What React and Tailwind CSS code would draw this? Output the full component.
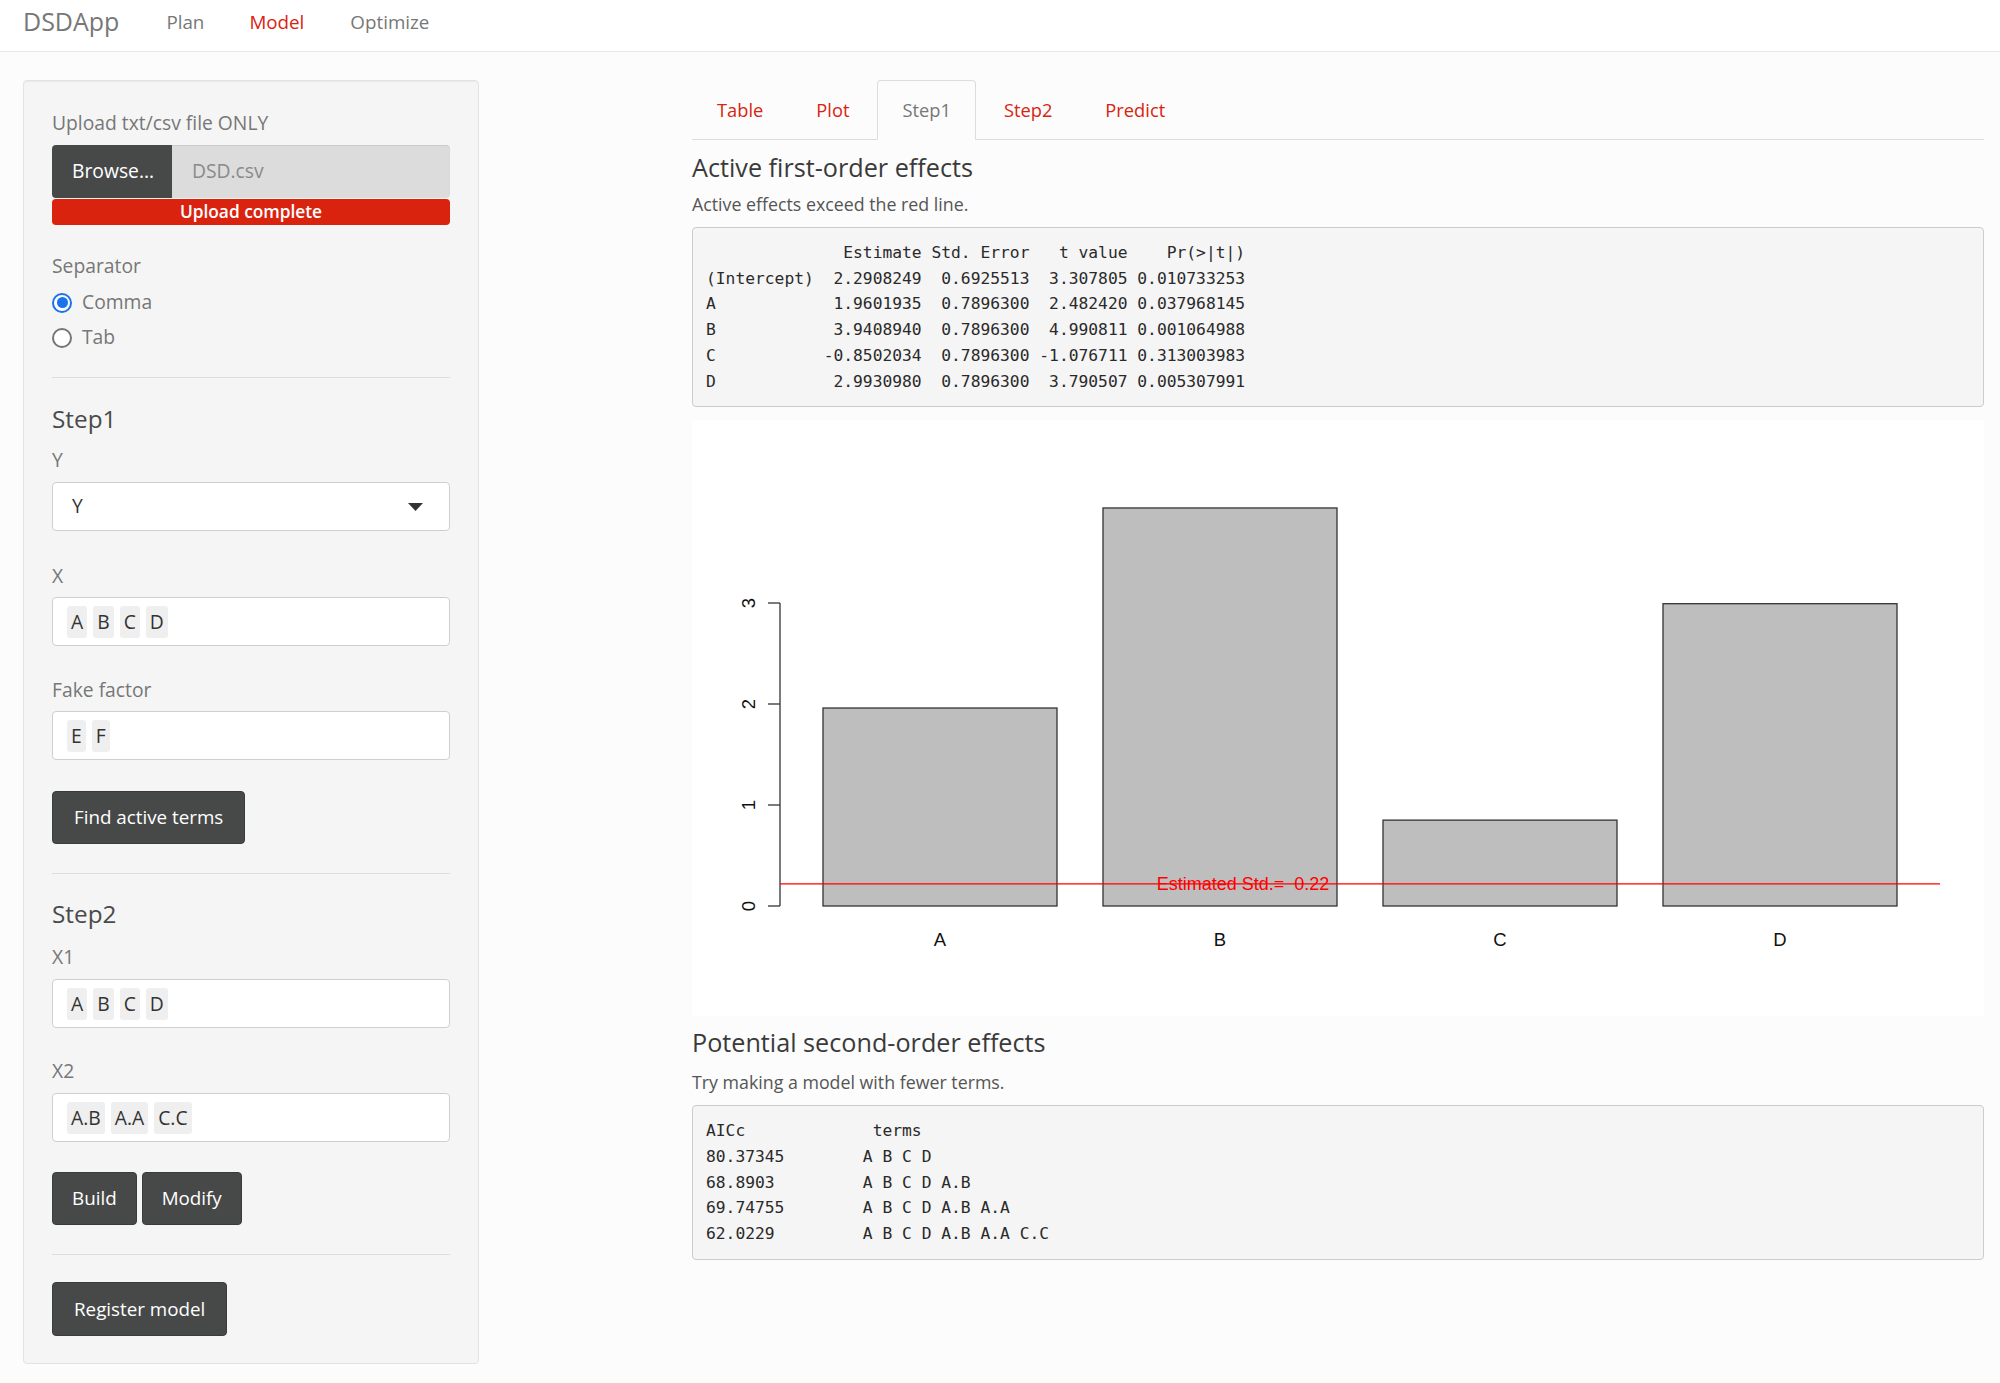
import React from "react";

const coefRows = [
  "              Estimate Std. Error   t value    Pr(>|t|)",
  "(Intercept)  2.2908249  0.6925513  3.307805 0.010733253",
  "A            1.9601935  0.7896300  2.482420 0.037968145",
  "B            3.9408940  0.7896300  4.990811 0.001064988",
  "C           -0.8502034  0.7896300 -1.076711 0.313003983",
  "D            2.9930980  0.7896300  3.790507 0.005307991",
];

const aicRows = [
  "AICc             terms",
  "80.37345        A B C D",
  "68.8903         A B C D A.B",
  "69.74755        A B C D A.B A.A",
  "62.0229         A B C D A.B A.A C.C",
];

const bars = [
  { name: "A", value: 1.9601935 },
  { name: "B", value: 3.940894 },
  { name: "C", value: 0.8502034 },
  { name: "D", value: 2.993098 },
];

const Label = ({ children, className = "" }) => (
  <div className={`text-[19.3px] leading-[26px] text-[#777] ${className}`}>
    {children}
  </div>
);

const Heading = ({ children, className = "" }) => (
  <div className={`text-[24.3px] leading-[32px] text-[#4a4a4a] ${className}`}>
    {children}
  </div>
);

const Divider = ({ className = "" }) => (
  <div className={`h-px bg-[#dedede] ${className}`} />
);

const DarkButton = ({ children, className = "" }) => (
  <button
    className={`h-[53px] rounded-[4px] bg-[#474949] border border-[#3a3c3c] text-white text-[18.8px] ${className}`}
  >
    {children}
  </button>
);

const TagInput = ({ tags, className = "" }) => (
  <div
    className={`h-[49px] bg-white border border-[#cfcfcf] rounded-[4px] flex items-center gap-[6px] pl-[14px] ${className}`}
  >
    {tags.map((t) => (
      <span
        key={t}
        className="h-[32px] px-[4px] rounded-[3px] bg-[#efefef] text-[#333] text-[19.3px] leading-[32px]"
      >
        {t}
      </span>
    ))}
  </div>
);

const Radio = ({ checked, label, className = "" }) => (
  <div className={`h-[35px] flex items-center gap-[10px] ${className}`}>
    {checked ? (
      <span className="w-[20px] h-[20px] rounded-full border-[2px] border-[#1a73e8] bg-white flex items-center justify-center">
        <span className="w-[11px] h-[11px] rounded-full bg-[#1a73e8]" />
      </span>
    ) : (
      <span className="w-[20px] h-[20px] rounded-full border-[2px] border-[#767676] bg-white" />
    )}
    <span className="text-[19.3px] text-[#777]">{label}</span>
  </div>
);

const Sidebar = () => (
  <div className="w-[456px] h-[1284px] bg-[#f5f5f5] border border-[#e3e3e3] rounded-[4px] shadow-[inset_0_1px_1px_rgba(0,0,0,0.05)] px-[28px] pt-[29px]">
    <Label>Upload txt/csv file ONLY</Label>
    <div className="mt-[9px] flex h-[53px]">
      <div className="w-[120px] bg-[#474949] rounded-l-[4px] flex items-center pl-[20px] text-white text-[19.3px] font-medium">
        Browse...
      </div>
      <div className="flex-1 bg-[#dcdcdc] rounded-r-[4px] flex items-center pl-[20px] text-[#8a8a8a] text-[19.3px] shadow-[inset_0_1px_1px_rgba(0,0,0,0.08)]">
        DSD.csv
      </div>
    </div>
    <div className="mt-[1px] h-[26px] bg-[#d9230f] rounded-[4px] flex items-center justify-center text-white text-[17.3px] font-semibold">
      Upload complete
    </div>

    <Label className="mt-[28px]">Separator</Label>
    <Radio checked label="Comma" className="mt-[6px]" />
    <Radio label="Tab" />

    <Divider className="mt-[22px]" />

    <Heading className="mt-[25px]">Step1</Heading>
    <Label className="mt-[12px]">Y</Label>
    <div className="mt-[9px] h-[49px] bg-white border border-[#cfcfcf] rounded-[4px] flex items-center justify-between pl-[19px] pr-[26px]">
      <span className="text-[19.3px] text-[#333]">Y</span>
      <svg width="15" height="8" viewBox="0 0 15 8">
        <path d="M0 0 L15 0 L7.5 8 Z" fill="#333" />
      </svg>
    </div>
    <Label className="mt-[32px]">X</Label>
    <TagInput tags={["A", "B", "C", "D"]} className="mt-[8px]" />
    <Label className="mt-[31px]">Fake factor</Label>
    <TagInput tags={["E", "F"]} className="mt-[8px]" />
    <DarkButton className="mt-[31px] h-[52px] px-[21px]">Find active terms</DarkButton>

    <Divider className="mt-[29px]" />

    <Heading className="mt-[24px]">Step2</Heading>
    <Label className="mt-[14px]">X1</Label>
    <TagInput tags={["A", "B", "C", "D"]} className="mt-[9px]" />
    <Label className="mt-[30px]">X2</Label>
    <TagInput tags={["A.B", "A.A", "C.C"]} className="mt-[9px]" />
    <div className="mt-[30px] flex gap-[5px]">
      <DarkButton className="px-[19px]">Build</DarkButton>
      <DarkButton className="px-[19px]">Modify</DarkButton>
    </div>

    <Divider className="mt-[29px]" />

    <DarkButton className="mt-[27px] h-[54px] px-[21px]">Register model</DarkButton>
  </div>
);

const Tabs = () => {
  const tabs = ["Table", "Plot", "Step1", "Step2", "Predict"];
  return (
    <div className="flex border-b border-[#dddddd] h-[60px]">
      {tabs.map((t) => {
        const active = t === "Step1";
        return (
          <div
            key={t}
            className={`h-[60px] mr-[3px] px-[24px] flex items-center text-[18.3px] rounded-t-[4px] border ${
              active
                ? "border-[#dddddd] border-b-[#fcfcfc] bg-[#fcfcfc] text-[#777]"
                : "border-transparent text-[#d9230f]"
            }`}
          >
            {t}
          </div>
        );
      })}
    </div>
  );
};

const Pre = ({ lines, className = "" }) => (
  <pre
    className={`bg-[#f5f5f5] border border-[#cccccc] rounded-[4px] px-[13px] py-[12px] font-['DejaVu_Sans_Mono',monospace] text-[16.3px] leading-[25.7px] text-[#2a2a2a] whitespace-pre ${className}`}
  >
    {lines.join("\n")}
  </pre>
);

const EffectsChart = () => {
  const zeroY = 486;
  const unit = 101;
  const axisX = 88;
  const ticks = [0, 1, 2, 3];
  const red = zeroY - 0.22 * unit;
  return (
    <svg
      width="1292"
      height="596"
      viewBox="0 0 1292 596"
      className="block bg-white"
      fontFamily="'Liberation Sans', Arial, sans-serif"
    >
      {/* y axis */}
      <line x1={axisX} y1={zeroY - 3 * unit} x2={axisX} y2={zeroY} stroke="#333" strokeWidth="1.3" />
      {ticks.map((t) => (
        <g key={t}>
          <line
            x1={axisX - 12}
            y1={zeroY - t * unit}
            x2={axisX}
            y2={zeroY - t * unit}
            stroke="#333"
            strokeWidth="1.3"
          />
          <text
            x={63}
            y={zeroY - t * unit}
            fontSize="18.5"
            fill="#111"
            textAnchor="middle"
            transform={`rotate(-90 63 ${zeroY - t * unit})`}
          >
            {t}
          </text>
        </g>
      ))}
      {bars.map((b, i) => {
        const x = 131 + i * 280;
        const h = b.value * unit;
        return (
          <g key={b.name}>
            <rect
              x={x}
              y={zeroY - h}
              width="234"
              height={h}
              fill="#bebebe"
              stroke="#333"
              strokeWidth="1.3"
            />
            <text x={x + 117} y={525.5} fontSize="18.5" fill="#111" textAnchor="middle">
              {b.name}
            </text>
          </g>
        );
      })}
      <line x1={axisX} y1={red} x2={1248} y2={red} stroke="#ff0000" strokeWidth="1.2" />
      <text x={551} y={red + 6.5} fontSize="18" fill="#ff0000" textAnchor="middle" xmlSpace="preserve">
        {"Estimated Std.=  0.22"}
      </text>
    </svg>
  );
};

const MainPanel = () => (
  <div className="w-[1292px] ml-[213px]">
    <Tabs />
    <div className="mt-[10px] text-[25.2px] leading-[34px] text-[#3a3a3a]">
      Active first-order effects
    </div>
    <div className="mt-[8px] text-[17.8px] leading-[24px] text-[#555]">
      Active effects exceed the red line.
    </div>
    <Pre lines={coefRows} className="mt-[11px]" />
    <div className="mt-[13px]">
      <EffectsChart />
    </div>
    <div className="mt-[9px] text-[25.2px] leading-[34px] text-[#3a3a3a]">
      Potential second-order effects
    </div>
    <div className="mt-[11px] text-[17.8px] leading-[24px] text-[#555]">
      Try making a model with fewer terms.
    </div>
    <Pre lines={aicRows} className="mt-[11px]" />
  </div>
);

const App = () => {
  return (
    <div className="min-h-screen bg-[#fcfcfc] font-['Open_Sans',sans-serif]">
      <div className="h-[52px] bg-white border-b border-[#e7e7e7] flex items-start">
        <div className="ml-[23px] pt-[5px] text-[25px] leading-[32px] text-[#777]">
          DSDApp
        </div>
        <div className="ml-[47px] pt-[9px] text-[18.8px] leading-[26px] text-[#777]">
          Plan
        </div>
        <div className="ml-[45px] pt-[9px] text-[18.8px] leading-[26px] text-[#d9230f]">
          Model
        </div>
        <div className="ml-[46px] pt-[9px] text-[18.8px] leading-[26px] text-[#777]">
          Optimize
        </div>
      </div>
      <div className="flex items-start pl-[23px] pt-[28px]">
        <Sidebar />
        <MainPanel />
      </div>
    </div>
  );
};

export default App;
